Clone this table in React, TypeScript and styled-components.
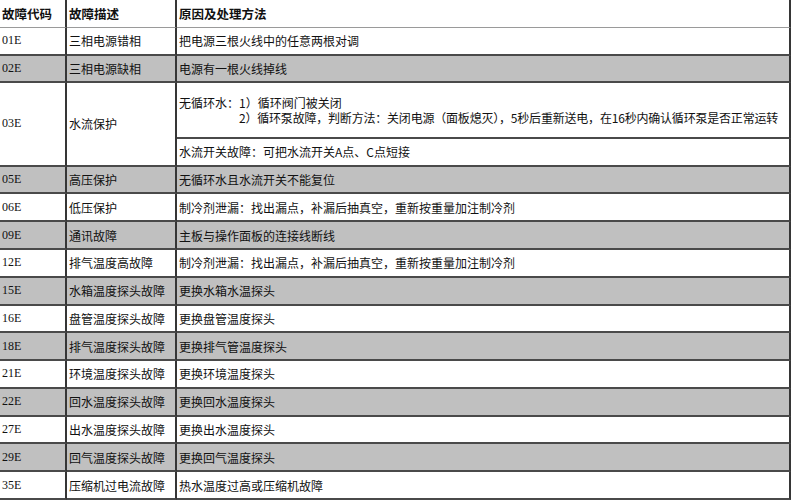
import React from "react";
import styled, { createGlobalStyle } from "styled-components";

const Global = createGlobalStyle`
  html, body { margin: 0; padding: 0; background: #ffffff; }
  body { font-family: "Noto Sans CJK SC", "Noto Sans", sans-serif; color: #111; }
`;

const Table = styled.div`
  display: grid;
  grid-template-columns: 67px 110px 1fr;
  grid-template-rows: repeat(18, 1fr);
  width: 791px;
  height: 500px;
  overflow: hidden;
`;

const Cell = styled.div<{ $shade?: boolean; $head?: boolean; $code?: boolean; $span?: number }>`
  display: flex;
  align-items: center;
  min-width: 0;
  white-space: nowrap;
  box-sizing: border-box;
  padding-left: 2px;
  background: ${(p) => (p.$shade ? "#c0c0c0" : "#ffffff")};
  border-right: 2px solid #363636;
  border-bottom: ${(p) => (p.$head ? "1px solid #9a9a9a" : "2px solid #4a4a4a")};
  grid-row: ${(p) => (p.$span ? `span ${p.$span}` : "auto")};
  font-family: ${(p) =>
    p.$code ? '"Liberation Serif", "Noto Sans CJK SC", serif' : '"Noto Sans CJK SC", "Noto Sans", sans-serif'};
  font-size: ${(p) => (p.$head ? "12.5px" : "12px")};
  font-weight: ${(p) => (p.$head ? 700 : 400)};
  color: #111;
`;

const Lines = styled.div`
  display: flex;
  flex-direction: column;
  line-height: 15px;
`;

const Indented = styled.span`
  padding-left: 5em;
  letter-spacing: -0.2px;
`;

type Row = { code: string; desc: string; cause: string };

const rows: Row[] = [
  { code: "05E", desc: "高压保护", cause: "无循环水且水流开关不能复位" },
  { code: "06E", desc: "低压保护", cause: "制冷剂泄漏：找出漏点，补漏后抽真空，重新按重量加注制冷剂" },
  { code: "09E", desc: "通讯故障", cause: "主板与操作面板的连接线断线" },
  { code: "12E", desc: "排气温度高故障", cause: "制冷剂泄漏：找出漏点，补漏后抽真空，重新按重量加注制冷剂" },
  { code: "15E", desc: "水箱温度探头故障", cause: "更换水箱水温探头" },
  { code: "16E", desc: "盘管温度探头故障", cause: "更换盘管温度探头" },
  { code: "18E", desc: "排气温度探头故障", cause: "更换排气管温度探头" },
  { code: "21E", desc: "环境温度探头故障", cause: "更换环境温度探头" },
  { code: "22E", desc: "回水温度探头故障", cause: "更换回水温度探头" },
  { code: "27E", desc: "出水温度探头故障", cause: "更换出水温度探头" },
  { code: "29E", desc: "回气温度探头故障", cause: "更换回气温度探头" },
  { code: "35E", desc: "压缩机过电流故障", cause: "热水温度过高或压缩机故障" },
];

export default function App() {
  return (
    <>
      <Global />
      <Table>
        <Cell $head>故障代码</Cell>
        <Cell $head>故障描述</Cell>
        <Cell $head>原因及处理方法</Cell>

        <Cell $code>01E</Cell>
        <Cell>三相电源错相</Cell>
        <Cell>把电源三根火线中的任意两根对调</Cell>

        <Cell $code $shade>02E</Cell>
        <Cell $shade>三相电源缺相</Cell>
        <Cell $shade>电源有一根火线掉线</Cell>

        <Cell $code $span={3}>03E</Cell>
        <Cell $span={3}>水流保护</Cell>
        <Cell $span={2}>
          <Lines>
            <span>无循环水：1）循环阀门被关闭</span>
            <Indented>2）循环泵故障，判断方法：关闭电源（面板熄灭），5秒后重新送电，在16秒内确认循环泵是否正常运转</Indented>
          </Lines>
        </Cell>
        <Cell>水流开关故障：可把水流开关A点、C点短接</Cell>

        {rows.map((r, i) => {
          const shade = i % 2 === 0;
          return (
            <React.Fragment key={r.code}>
              <Cell $code $shade={shade}>{r.code}</Cell>
              <Cell $shade={shade}>{r.desc}</Cell>
              <Cell $shade={shade}>{r.cause}</Cell>
            </React.Fragment>
          );
        })}
      </Table>
    </>
  );
}
